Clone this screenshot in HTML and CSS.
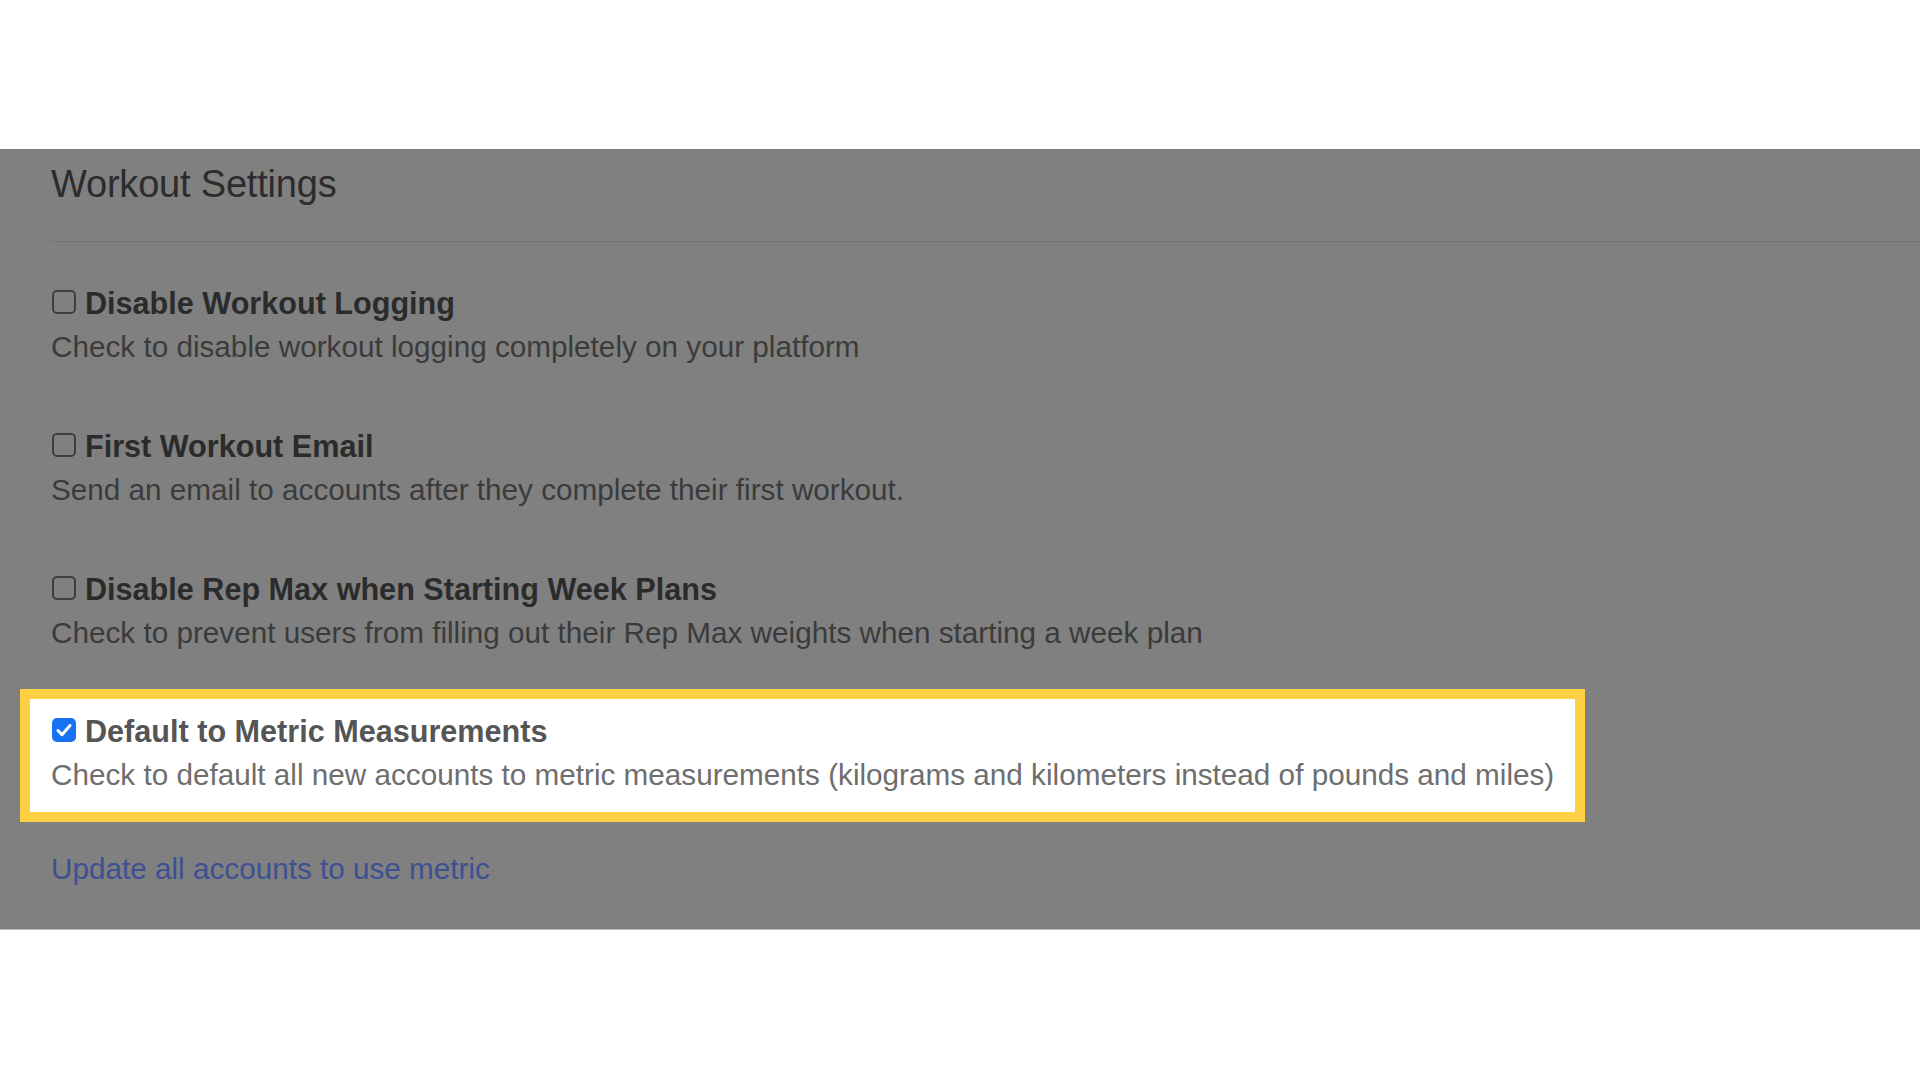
FILE: index.html
```html
<!DOCTYPE html>
<html lang="en">
<head>
<meta charset="utf-8">
<title>Workout Settings</title>
<link rel="stylesheet" href="styles.css">
</head>
<body>
<div class="top-space"></div>
<section class="panel">
  <h2 class="title">Workout Settings</h2>
  <div class="divider"></div>

  <div class="setting">
    <div class="label-row">
      <span class="box"></span>
      <span class="label">Disable Workout Logging</span>
    </div>
    <div class="desc">Check to disable workout logging completely on your platform</div>
  </div>

  <div class="setting">
    <div class="label-row">
      <span class="box"></span>
      <span class="label">First Workout Email</span>
    </div>
    <div class="desc">Send an email to accounts after they complete their first workout.</div>
  </div>

  <div class="setting">
    <div class="label-row">
      <span class="box"></span>
      <span class="label">Disable Rep Max when Starting Week Plans</span>
    </div>
    <div class="desc">Check to prevent users from filling out their Rep Max weights when starting a week plan</div>
  </div>

  <div class="setting highlight">
    <div class="label-row">
      <span class="box checked"><svg viewBox="0 0 24 24" width="24" height="24"><path d="M6 12.5l4 4.2 8-9.2" fill="none" stroke="#fff" stroke-width="3" stroke-linecap="round" stroke-linejoin="round"/></svg></span>
      <span class="label">Default to Metric Measurements</span>
    </div>
    <div class="desc">Check to default all new accounts to metric measurements (kilograms and kilometers instead of pounds and miles)</div>
  </div>

  <a class="link" href="#">Update all accounts to use metric</a>
</section>
</body>
</html>
```

FILE: styles.css
```css
html, body {
  margin: 0;
  padding: 0;
  background: #ffffff;
}

body {
  font-family: "Liberation Sans", Arial, Helvetica, sans-serif;
  width: 1920px;
  height: 1080px;
  overflow: hidden;
}

.top-space {
  height: 149px;
}

.panel {
  box-sizing: border-box;
  height: 781px;
  background: #808080;
  padding: 13px 0 0 51px;
  display: flex;
  flex-direction: column;
  align-items: flex-start;
  border-bottom: 1px solid #bdbdbd;
}

.title {
  margin: 0 0 35px 0;
  font-size: 38px;
  line-height: 44px;
  font-weight: 400;
  color: #2c2c2c;
  letter-spacing: -0.2px;
}

.divider {
  align-self: stretch;
  height: 1px;
  background: #747474;
  margin-bottom: 40px;
}

.setting {
  margin-bottom: 57px;
}

.label-row {
  display: flex;
  align-items: center;
  gap: 9px;
  height: 43px;
}

.box {
  box-sizing: border-box;
  width: 24px;
  height: 24px;
  border: 2px solid #3e3e3e;
  border-radius: 5px;
  margin-left: 1px;
  margin-top: -4px;
  flex: none;
  display: flex;
}

.box.checked {
  border: none;
  background: #1672f3;
}

.label {
  font-size: 30.6px;
  font-weight: 700;
  color: #2b2b2b;
  line-height: 43px;
}

.desc {
  font-size: 29.7px;
  line-height: 43px;
  color: #3b3b3b;
  white-space: nowrap;
}

.setting.highlight {
  margin: -22px 0 25px -31px;
  padding: 11px 21px 16px 21px;
  border: 10px solid #fed044;
  background: #ffffff;
  width: fit-content;
}

.highlight .label {
  color: #555555;
}

.highlight .desc {
  color: #6e6e6e;
}

.link {
  font-size: 29.7px;
  line-height: 43px;
  color: #3d5093;
  text-decoration: none;
}
```
